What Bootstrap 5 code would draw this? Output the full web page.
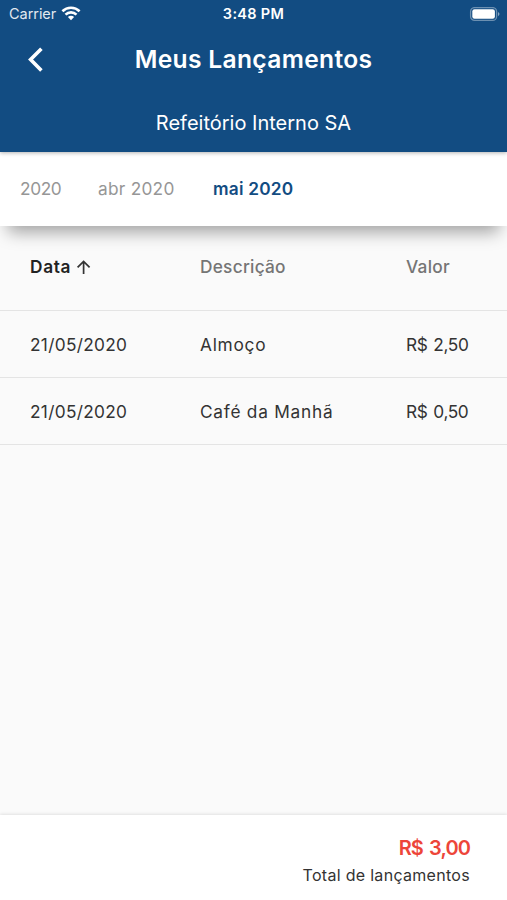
<!DOCTYPE html>
<html lang="pt-BR">
<head>
<meta charset="utf-8">
<meta name="viewport" content="width=device-width, initial-scale=1">
<title>Meus Lançamentos</title>
<link href="https://cdn.jsdelivr.net/npm/bootstrap@5.3.0/dist/css/bootstrap.min.css" rel="stylesheet">
<style>
body{font-family:Inter,Poppins,sans-serif;background:#fafafa;color:#333;font-size:17.3px;line-height:24px;overflow:hidden}
svg{display:block;flex:none}
.app-head{background:#124c82;height:152px;z-index:3;box-shadow:0 1px 4px rgba(0,0,0,.3)}
.status{height:28px;font-size:14.5px;padding:0 7px 0 9px}
.status>*{flex:1 1 0}
.carrier{opacity:.88;letter-spacing:-.05px}
.clock{font-weight:600;letter-spacing:.3px;padding-right:2px}
.title-row{height:62px}
.title-row .side{width:64px;padding-left:27px}
.title-row h1{font-size:24.6px;font-weight:600;letter-spacing:.33px;line-height:32px}
.subtitle{height:62px;font-size:20px;padding-top:3px}
.months{height:74px;z-index:2;padding:0 19px 0 20px;color:#969696;box-shadow:0 14px 16px -8px rgba(0,0,0,.36)}
.months a{color:inherit;text-decoration:none}
.months .year{width:78px;letter-spacing:-.4px}
.months .prev{width:115px;letter-spacing:.25px}
.months .current{color:#124c82;font-weight:600;letter-spacing:.2px}
.entries{table-layout:fixed;width:100%}
.entries th,.entries td{padding:2px 0 0;border-bottom:1.5px solid #e4e4e4;height:67.2px;vertical-align:middle}
.entries th{height:84.5px;padding:0 0 3px;font-weight:500;color:#757575;letter-spacing:.25px}
.entries .sorted{color:#222;font-weight:600;letter-spacing:.65px}
.entries tr>:first-child{padding-left:30px;width:200px}
.entries tr>:last-child{width:101px}
.entries .c-date{letter-spacing:.3px}
.entries .c-desc{letter-spacing:.74px}
.entries .c-value{letter-spacing:-.4px;word-spacing:1.5px}
.total{height:85px;background:#fff;box-shadow:0 -1px 3px rgba(0,0,0,.1);padding:20px 37px 0 0}
.total strong{font-size:20px;font-weight:600;color:#ed4539;line-height:27px;letter-spacing:-.9px;word-spacing:2px}
.total span{font-size:16px;line-height:26px;letter-spacing:.3px}
</style>
</head>
<body>
<div class="vh-100 d-flex flex-column">
  <header class="app-head position-relative text-white flex-shrink-0">
    <div class="status d-flex align-items-center">
      <div class="d-flex align-items-center"><span class="carrier">Carrier</span>
        <svg class="ms-1" width="22" height="16" viewBox="0 0 22 16" fill="none" stroke="#fff" stroke-width="2.6"><path d="M2.4 5.2a12.4 12.4 0 0 1 17.2 0M5.5 8.6a7.9 7.9 0 0 1 11 0"/><path d="M11 14.2 7.9 11.1a4.4 4.4 0 0 1 6.2 0z" fill="#fff" stroke="none"/></svg>
      </div>
      <div class="clock text-center">3:48 PM</div>
      <div class="d-flex justify-content-end">
        <svg width="31" height="15" viewBox="0 0 31 15"><rect x="1.6" y=".6" width="26" height="12.8" rx="4" fill="none" stroke="#fff" stroke-opacity=".38" stroke-width="1.3"/><rect x="3.3" y="2.3" width="22.6" height="9.4" rx="2.2" fill="#fff"/><path d="M29 5q3 2.1 0 4.2z" fill="#fff" fill-opacity=".5"/></svg>
      </div>
    </div>
    <div class="title-row d-flex align-items-center">
      <div class="side"><svg width="18" height="26" viewBox="0 0 18 26" fill="none" stroke="#fff" stroke-width="3.6"><path d="M14.4 3 3.6 13.8l10.8 10.8" transform="translate(0 -.2)"/></svg></div>
      <h1 class="flex-grow-1 text-center m-0">Meus Lançamentos</h1>
      <div class="side"></div>
    </div>
    <div class="subtitle d-flex align-items-center justify-content-center">Refeitório Interno SA</div>
  </header>
  <nav class="months position-relative bg-white d-flex align-items-center flex-shrink-0">
    <a class="year" href="#">2020</a><a class="prev" href="#">abr 2020</a><a class="current" href="#">mai 2020</a>
  </nav>
  <main class="flex-grow-1">
    <table class="entries">
      <thead><tr>
        <th class="sorted"><div class="d-flex align-items-center">Data<svg class="ms-1" width="16" height="16" viewBox="0 0 16 16" fill="none" stroke="#333" stroke-width="1.7"><path d="M8.6 15V2.6M2.6 8.4l6-6 6 6"/></svg></div></th>
        <th>Descrição</th><th>Valor</th>
      </tr></thead>
      <tbody>
        <tr><td class="c-date">21/05/2020</td><td class="c-desc">Almoço</td><td class="c-value">R$ 2,50</td></tr>
        <tr><td class="c-date">21/05/2020</td><td class="c-desc">Café da Manhã</td><td class="c-value">R$ 0,50</td></tr>
      </tbody>
    </table>
  </main>
  <footer class="total d-flex flex-column align-items-end flex-shrink-0">
    <strong>R$ 3,00</strong><span>Total de lançamentos</span>
  </footer>
</div>
<script src="https://cdn.jsdelivr.net/npm/bootstrap@5.3.0/dist/js/bootstrap.bundle.min.js"></script>
</body>
</html>
